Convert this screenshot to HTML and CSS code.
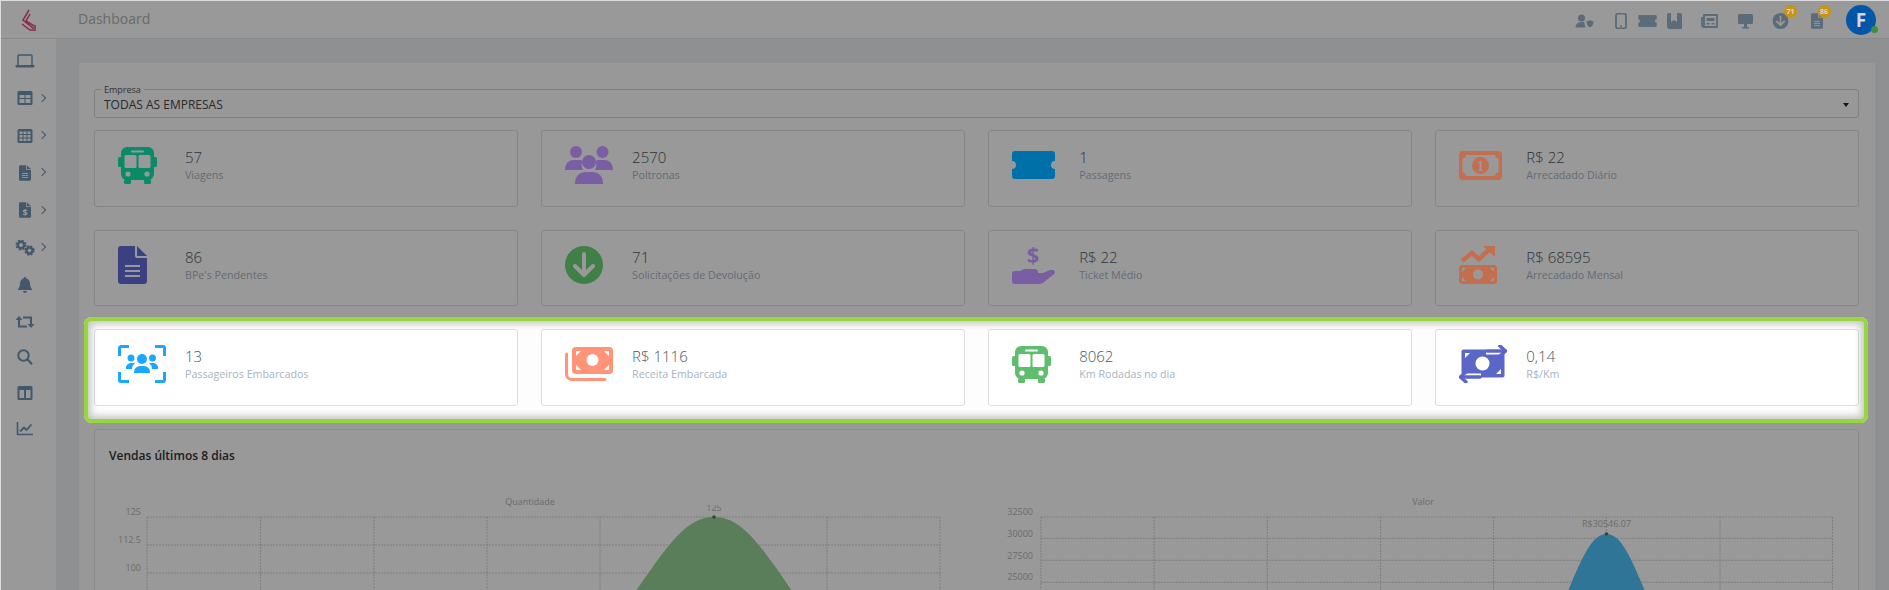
FILE: index.html
```html
<!DOCTYPE html>
<html lang="en">
<head>
    <meta charset="UTF-8">
    <meta name="viewport" content="width=device-width, initial-scale=1.0">
    <title>Dashboard</title>
    <link rel="stylesheet" href="styles.css">
</head>
<body>
<div class="shell">

    <svg class="icon-defs" width="0" height="0">
        <defs>
            <symbol id="bus" viewBox="0 0 39 37">
                <rect x="3" y="0" width="33" height="33" rx="6" fill="currentColor"/>
                <rect x="0" y="10" width="4" height="10" rx="1.5" fill="currentColor"/>
                <rect x="35" y="10" width="4" height="10" rx="1.5" fill="currentColor"/>
                <rect x="6" y="32" width="7" height="5" rx="1.5" fill="currentColor"/>
                <rect x="26" y="32" width="7" height="5" rx="1.5" fill="currentColor"/>
                <rect class="cut" x="6.5" y="8" width="12" height="13" rx="1.5"/>
                <rect class="cut" x="20.5" y="8" width="12" height="13" rx="1.5"/>
                <rect class="cut" x="13" y="3.5" width="13" height="2" rx="1"/>
                <circle class="cut" cx="10" cy="27" r="2.6"/>
                <circle class="cut" cx="29" cy="27" r="2.6"/>
            </symbol>
            <symbol id="arrow-circle" viewBox="0 0 38 38">
                <circle cx="19" cy="19" r="19" fill="currentColor"/>
                <path class="cut-line" d="M19 8V28M10 20L19 29L28 20" fill="none" stroke-width="4" stroke-linecap="round" stroke-linejoin="round"/>
            </symbol>
            <symbol id="ticket" viewBox="0 0 43 28">
                <path fill="currentColor" d="M3 0H40a3 3 0 0 1 3 3V10a4 4 0 0 0 0 8V25a3 3 0 0 1-3 3H3a3 3 0 0 1-3-3V18a4 4 0 0 0 0-8V3a3 3 0 0 1 3-3z"/>
            </symbol>
            <symbol id="doc" viewBox="0 0 29 38">
                <path fill="currentColor" d="M3 0H17V10a2 2 0 0 0 2 2H29V35a3 3 0 0 1-3 3H3a3 3 0 0 1-3-3V3a3 3 0 0 1 3-3zM19 0L29 10H19z"/>
                <path class="cut-line" d="M7 20H22M7 25H22M7 30H22" stroke-width="2.2"/>
            </symbol>
        </defs>
    </svg>

    <header class="topbar">
        <div class="brand">
            <svg class="logo" viewBox="0 0 17 22">
                <path d="M9 1L3 11L13 19H16M10 5L6 12L14 17H16M2 15L10 21H16" fill="none" stroke="#e2457f" stroke-width="1.5"/>
            </svg>
            <span class="page-title">Dashboard</span>
        </div>
        <div class="top-tools">
            <svg class="top-icon" viewBox="0 0 27 16">
                <circle cx="10.500" cy="5" r="3.500" fill="currentColor"/>
                <path d="M4.500 14.500a5.500 5.500 0 0 1 5.500-5.500h3l1.500 5.500z" fill="currentColor"/>
                <path d="M15.500 8.500l3.500-1.300 3.500 1.300c0 3.500-1.800 5.300-3.500 6-1.700-.7-3.500-2.500-3.500-6z" fill="currentColor"/>
            </svg>
            <div class="icon-group">
                <svg class="top-icon" viewBox="0 0 27 16">
                    <rect x="9" y="0.500" width="10" height="15" rx="2" fill="none" stroke="currentColor" stroke-width="1.800"/>
                    <circle cx="14" cy="13" r="1" fill="currentColor"/>
                </svg>
                <svg class="top-icon" viewBox="0 0 27 16"><use href="#ticket" x="1" y="2" width="25" height="12"/></svg>
                <svg class="top-icon" viewBox="0 0 27 16">
                    <path fill="currentColor" d="M8 0h2V9l3-2 3 2V0h3a2 2 0 0 1 2 2V16H9a3 3 0 0 1-3-3V2a2 2 0 0 1 2-2z"/>
                </svg>
            </div>
            <svg class="top-icon" viewBox="0 0 27 16">
                <path fill="none" stroke="currentColor" stroke-width="1.800" d="M8 2H21V14H8zM8 5H6V12a2 2 0 0 0 2 2"/>
                <path d="M10.500 5h8v3h-8zM10.500 10h3v1.500h-3zM15.500 10h3v1.500h-3z" fill="currentColor"/>
            </svg>
            <svg class="top-icon" viewBox="0 0 27 16">
                <rect x="6" y="1" width="15" height="10" rx="1.500" fill="currentColor"/>
                <path d="M12 11h3v3h2v1.500h-7V14h2z" fill="currentColor"/>
            </svg>
            <div class="tool-badged">
                <svg class="top-icon" viewBox="0 0 27 16"><use href="#arrow-circle" x="5.500" y="0" width="16" height="16"/></svg>
                <span class="badge badge-down">71</span>
            </div>
            <div class="tool-badged">
                <svg class="top-icon" viewBox="0 0 27 16"><use href="#doc" x="8" y="0" width="12" height="16"/></svg>
                <span class="badge badge-doc">86</span>
            </div>
            <div class="avatar">F<span class="status-dot"></span></div>
        </div>
    </header>

    <div class="layout">
        <aside class="sidebar">
            <div class="side-item">
                <svg class="side-icon" viewBox="0 0 20 14">
                    <path d="M3 11V2a1 1 0 0 1 1-1H16a1 1 0 0 1 1 1v9" fill="none" stroke="currentColor" stroke-width="1.500"/>
                    <path d="M0.500 11H19.500V12a1.500 1.500 0 0 1-1.500 1.500H2A1.500 1.500 0 0 1 0.500 12z" fill="currentColor"/>
                </svg>
            </div>
            <div class="side-item">
                <svg class="side-icon" viewBox="0 0 20 14">
                    <rect x="2.500" y="0" width="15" height="14" rx="1.500" fill="currentColor"/>
                    <path d="M4.500 4h5v3h-5zM10.500 4h5v3h-5zM4.500 8h5v4h-5zM10.500 8h5v4h-5z" fill="#fff"/>
                </svg>
                <span class="chevron"></span>
            </div>
            <div class="side-item">
                <svg class="side-icon" viewBox="0 0 20 14">
                    <rect x="2.500" y="0" width="15" height="14" rx="1.500" fill="currentColor"/>
                    <path d="M4.500 2.500h3v2.500h-3zM8.500 2.500h3v2.500h-3zM12.500 2.500h3v2.500h-3zM4.500 6h3v2.500h-3zM8.500 6h3v2.500h-3zM12.500 6h3v2.500h-3zM4.500 9.500h3v2.500h-3zM8.500 9.500h3v2.500h-3zM12.500 9.500h3v2.500h-3z" fill="#fff"/>
                </svg>
                <span class="chevron"></span>
            </div>
            <div class="side-item">
                <svg class="side-icon" viewBox="0 0 20 16"><use href="#doc" x="4" y="0" width="12" height="16"/></svg>
                <span class="chevron"></span>
            </div>
            <div class="side-item">
                <svg class="side-icon" viewBox="0 0 20 16">
                    <use href="#doc" x="4" y="0" width="12" height="16"/>
                    <rect x="6" y="6" width="8" height="9" fill="currentColor"/>
                    <text x="10" y="14" text-anchor="middle" class="icon-text">$</text>
                </svg>
                <span class="chevron"></span>
            </div>
            <div class="side-item">
                <svg class="side-icon" viewBox="0 0 20 16">
                    <circle cx="6" cy="5" r="3.200" fill="none" stroke="currentColor" stroke-width="2.400"/>
                    <circle cx="6" cy="5" r="4.700" fill="none" stroke="currentColor" stroke-width="1.600" stroke-dasharray="2 1.700"/>
                    <circle cx="14.500" cy="10.500" r="3" fill="none" stroke="currentColor" stroke-width="2.400"/>
                    <circle cx="14.500" cy="10.500" r="4.400" fill="none" stroke="currentColor" stroke-width="1.600" stroke-dasharray="2 1.500"/>
                </svg>
                <span class="chevron"></span>
            </div>
            <div class="side-item">
                <svg class="side-icon" viewBox="0 0 20 16">
                    <path fill="currentColor" d="M10 0a1.200 1.200 0 0 1 1.200 1.300C13.500 2 15 4 15 6.500c0 3 1 4.500 2 5.500v1H3v-1c1-1 2-2.500 2-5.500C5 4 6.500 2 8.800 1.300A1.200 1.200 0 0 1 10 0zM8 14h4a2 2 0 0 1-4 0z"/>
                </svg>
            </div>
            <div class="side-item side-low">
                <svg class="side-icon" viewBox="0 0 20 16">
                    <path d="M4 4V12.500H12M8 3.500H16V12" fill="none" stroke="currentColor" stroke-width="2"/>
                    <path d="M0.500 6L4 2L7.500 6zM12.500 10L16 14L19.500 10z" fill="currentColor"/>
                </svg>
            </div>
            <div class="side-item side-low">
                <svg class="side-icon" viewBox="0 0 20 16">
                    <circle cx="8.500" cy="6.500" r="5.200" fill="none" stroke="currentColor" stroke-width="2"/>
                    <path d="M12.500 10.500L17 15.200" stroke="currentColor" stroke-width="2.200"/>
                </svg>
            </div>
            <div class="side-item side-low">
                <svg class="side-icon" viewBox="0 0 20 14">
                    <rect x="2.500" y="0" width="15" height="14" rx="1.500" fill="currentColor"/>
                    <path d="M4.500 4h4.500v8h-4.500zM11 4h4.500v8H11z" fill="#fff"/>
                </svg>
            </div>
            <div class="side-item side-low">
                <svg class="side-icon" viewBox="0 0 20 14">
                    <path d="M2.500 0V12.500H18" fill="none" stroke="currentColor" stroke-width="1.600"/>
                    <path d="M5 9.500L9 5.500L11.500 8L16.500 2.500" fill="none" stroke="currentColor" stroke-width="1.800"/>
                </svg>
            </div>
        </aside>

        <main class="content">
            <section class="panel">
                <div class="select-box">
                    <span class="select-label">Empresa</span>
                    <span class="select-value">TODAS AS EMPRESAS</span>
                    <span class="select-caret"></span>
                </div>

                <div class="cards">
                    <div class="card">
                        <div class="card-icon"><svg class="i-dim i-teal" width="39" height="37"><use href="#bus"/></svg></div>
                        <div class="card-text"><div class="card-num">57</div><div class="card-label">Viagens</div></div>
                    </div>
                    <div class="card">
                        <div class="card-icon">
                            <svg class="i-dim i-purple" width="48" height="38" viewBox="0 0 48 38" fill="currentColor">
                                <circle cx="11" cy="6" r="6"/>
                                <circle cx="37.500" cy="6" r="6"/>
                                <circle cx="24" cy="16" r="7"/>
                                <path d="M0 24C0 17 4 14 9 14h5c2 0 3 .5 3.500 1.500a9 9 0 0 0 .5 8.500z"/>
                                <path d="M48 24C48 17 44 14 39 14h-5c-2 0-3 .5-3.500 1.500a9 9 0 0 1-.5 8.500z"/>
                                <path d="M10 38v-2a10 10 0 0 1 10-10h8a10 10 0 0 1 10 10v2z"/>
                            </svg>
                        </div>
                        <div class="card-text"><div class="card-num">2570</div><div class="card-label">Poltronas</div></div>
                    </div>
                    <div class="card">
                        <div class="card-icon"><svg class="i-dim i-blue" width="43" height="28"><use href="#ticket"/></svg></div>
                        <div class="card-text"><div class="card-num">1</div><div class="card-label">Passagens</div></div>
                    </div>
                    <div class="card">
                        <div class="card-icon">
                            <svg class="i-dim i-orange" width="43" height="29" viewBox="0 0 43 29">
                                <rect width="43" height="29" rx="4" fill="currentColor"/>
                                <path class="cut" d="M7 4H36c0 2 1.500 3.500 3.500 3.500V21.500c-2 0-3.500 1.500-3.500 3.500H7c0-2-1.500-3.500-3.500-3.500V7.500C5.500 7.500 7 6 7 4z"/>
                                <circle cx="21.500" cy="14.500" r="8.500" fill="currentColor"/>
                                <text x="21.500" y="19.500" text-anchor="middle" class="cut icon-one">1</text>
                            </svg>
                        </div>
                        <div class="card-text"><div class="card-num">R$ 22</div><div class="card-label">Arrecadado Diário</div></div>
                    </div>

                    <div class="card">
                        <div class="card-icon"><svg class="i-dim i-indigo" width="29" height="38"><use href="#doc"/></svg></div>
                        <div class="card-text"><div class="card-num">86</div><div class="card-label">BPe's Pendentes</div></div>
                    </div>
                    <div class="card">
                        <div class="card-icon"><svg class="i-dim i-green" width="38" height="38"><use href="#arrow-circle"/></svg></div>
                        <div class="card-text"><div class="card-num">71</div><div class="card-label">Solicitações de Devolução</div></div>
                    </div>
                    <div class="card">
                        <div class="card-icon">
                            <svg class="i-dim i-purple" width="43" height="38" viewBox="0 0 43 38" fill="currentColor">
                                <text x="21" y="17" text-anchor="middle" class="icon-dollar">$</text>
                                <path d="M0 28q0-3 3-3h5l4-2h10q4 0 4 3v1h5l7-3q4-1 5 2q0 2-2 3l-9 7q-2 2-5 2H3q-3 0-3-3z"/>
                            </svg>
                        </div>
                        <div class="card-text"><div class="card-num">R$ 22</div><div class="card-label">Ticket Médio</div></div>
                    </div>
                    <div class="card">
                        <div class="card-icon">
                            <svg class="i-dim i-orange" width="39" height="38" viewBox="0 0 39 38">
                                <path d="M3 15L13 7L20 13L31 3" fill="none" stroke="currentColor" stroke-width="4.500"/>
                                <path d="M24 0H36V11z" fill="currentColor"/>
                                <rect y="19" width="38" height="19" rx="3" fill="currentColor"/>
                                <circle class="cut" cx="19" cy="28.500" r="5"/>
                                <path class="cut" d="M3 22h4l-4 4zM35 22h-4l4 4zM3 35h4l-4-4zM35 35h-4l4-4z"/>
                            </svg>
                        </div>
                        <div class="card-text"><div class="card-num">R$ 68595</div><div class="card-label">Arrecadado Mensal</div></div>
                    </div>

                    <div class="card">
                        <div class="card-icon">
                            <svg class="i-sky" width="48" height="38" viewBox="0 0 48 38" fill="currentColor">
                                <path d="M1.500 11V3a1.500 1.500 0 0 1 1.500-1.500H11M37 1.500H45A1.500 1.500 0 0 1 46.500 3V11M46.500 27V35A1.500 1.500 0 0 1 45 36.500H37M11 36.500H3A1.500 1.500 0 0 1 1.500 35V27" fill="none" stroke="currentColor" stroke-width="3"/>
                                <circle cx="24" cy="14" r="5"/>
                                <circle cx="13" cy="13" r="3.500"/>
                                <circle cx="34.500" cy="13" r="3.500"/>
                                <path d="M16 28v-1a6 6 0 0 1 6-6h4a6 6 0 0 1 6 6v1z"/>
                                <path d="M8 24a5 5 0 0 1 5-6h4a8 8 0 0 0-3 6zM40 24a5 5 0 0 0-5-6h-4a8 8 0 0 1 3 6z"/>
                            </svg>
                        </div>
                        <div class="card-text"><div class="card-num">13</div><div class="card-label">Passageiros Embarcados</div></div>
                    </div>
                    <div class="card">
                        <div class="card-icon">
                            <svg class="i-coral" width="48" height="34" viewBox="0 0 48 34">
                                <rect x="7" y="0" width="41" height="27" rx="4" fill="currentColor"/>
                                <circle cx="27.500" cy="13" r="6" fill="#fff"/>
                                <path d="M11 4h5l-5 5zM44 4h-5l5 5zM11 23h5l-5-5zM44 23h-5l5-5z" fill="#fff"/>
                                <path d="M1.500 7V27a5.500 5.500 0 0 0 5.500 5.500H40" fill="none" stroke="currentColor" stroke-width="3" stroke-linecap="round"/>
                            </svg>
                        </div>
                        <div class="card-text"><div class="card-num">R$ 1116</div><div class="card-label">Receita Embarcada</div></div>
                    </div>
                    <div class="card">
                        <div class="card-icon"><svg class="i-bus-green" width="39" height="37"><use href="#bus"/></svg></div>
                        <div class="card-text"><div class="card-num">8062</div><div class="card-label">Km Rodadas no dia</div></div>
                    </div>
                    <div class="card">
                        <div class="card-icon">
                            <svg class="i-indigo-2" width="48" height="38" viewBox="0 0 48 38">
                                <rect x="2.500" y="4.500" width="43" height="28" rx="2" fill="currentColor"/>
                                <circle cx="23.500" cy="18.500" r="7" fill="#fff"/>
                                <path d="M6 8h5l-5 5zM42 29h-5l5-5z" fill="#fff"/>
                                <path d="M27 6H44M2 32H22" stroke="#fff" stroke-width="7"/>
                                <path d="M28 6H44M3 32H21" stroke="currentColor" stroke-width="3.500" stroke-linecap="round"/>
                                <path d="M41 1L46.500 6L41 11M7 27L1.500 32L7 37" fill="none" stroke="currentColor" stroke-width="3.500" stroke-linecap="round" stroke-linejoin="round"/>
                            </svg>
                        </div>
                        <div class="card-text"><div class="card-num">0,14</div><div class="card-label">R$/Km</div></div>
                    </div>
                </div>

                <div class="chart-card">
                    <h3 class="chart-heading">Vendas últimos 8 dias</h3>
                    <div class="charts">
                        <svg class="chart" viewBox="0 0 868 200">
                            <defs><clipPath id="peak-clip"><rect x="560" y="14" width="90" height="20"/></clipPath></defs>
                            <path class="grid-line" d="M39 26V200M152.400 26V200M266 26V200M379 26V200M492 26V200M606 26V200M719 26V200M832 26V200M39 26H832M39 54H832M39 82H832M39 110H832M39 138H832M39 166H832"/>
                            <path class="area-green" d="M528 100C562 50 580 26 606 26C632 26 650 50 684 100L730 190H482Z"/>
                            <circle class="peak-dot" cx="606" cy="26" r="1.800"/>
                            <text class="chart-title" x="422" y="14">Quantidade</text>
                            <text class="chart-value" x="606" y="20" clip-path="url(#peak-clip)">125</text>
                            <text class="axis-label" x="33" y="24">125</text>
                            <text class="axis-label" x="33" y="52">112.5</text>
                            <text class="axis-label" x="33" y="80">100</text>
                        </svg>
                        <svg class="chart" viewBox="0 0 868 200">
                            <path class="grid-line" d="M63.900 26V200M177.100 26V200M290.300 26V200M403.500 26V200M516.500 26V200M629.500 26V200M743 26V200M855.500 26V200M63.900 26H855.500M63.900 47.300H855.500M63.900 69.300H855.500M63.900 91.300H855.500M63.900 113H855.500"/>
                            <path class="area-blue" d="M591 100C604 70 614 43 629.500 43C645 43 655 70 668 100L690 190H570Z"/>
                            <circle class="peak-dot" cx="629.500" cy="43" r="1.800"/>
                            <text class="chart-title" x="446" y="14">Valor</text>
                            <text class="chart-value" x="629.500" y="36">R$30546.07</text>
                            <text class="axis-label" x="56" y="24">32500</text>
                            <text class="axis-label" x="56" y="46">30000</text>
                            <text class="axis-label" x="56" y="68">27500</text>
                            <text class="axis-label" x="56" y="89">25000</text>
                        </svg>
                    </div>
                </div>
            </section>
        </main>
    </div>

    <!-- tour highlight, dims everything around it -->
    <div class="tour-highlight"></div>
</div>
</body>
</html>
```

FILE: styles.css
```css
* {
    margin: 0;
    padding: 0;
    box-sizing: border-box;
}

html, body {
    height: 590px;
    overflow: hidden;
}

body {
    background-color: #dcdcdc;
    font-family: "Open Sans", "Liberation Sans", sans-serif;
    padding: 1px 0 0 1px;
}

.shell {
    position: relative;
    height: 589px;
    overflow: hidden;
    background-color: #eef0f4;
}

.icon-defs {
    position: absolute;
}

.cut {
    fill: var(--cut, #fff);
}

.cut-line {
    stroke: var(--cut, #fff);
}

/* top bar */
.topbar {
    height: 38px;
    background-color: #fff;
    border-bottom: 1px solid #e3e3e6;
    display: flex;
    justify-content: space-between;
    align-items: center;
    padding-right: 13px;
}

.brand {
    display: flex;
    align-items: center;
}

.logo {
    width: 17px;
    height: 22px;
    margin-left: 19px;
}

.page-title {
    margin: -2px 0 0 41px;
    font-size: 14px;
    color: #aeb2b6;
}

.top-tools {
    display: flex;
    align-items: center;
    gap: 8.5px;
    color: #98b2c8;
}

.icon-group {
    display: flex;
}

.top-icon {
    display: block;
    width: 27px;
    height: 16px;
    margin-top: 2px;
}

.tool-badged {
    position: relative;
}

.badge {
    position: absolute;
    z-index: 20;
    width: 13px;
    height: 13px;
    border-radius: 50%;
    background-color: #c7960e;
    color: #d9d9d9;
    font-size: 7px;
    font-weight: 700;
    line-height: 13px;
    text-align: center;
}

.badge-down {
    top: -6px;
    left: 17px;
}

.badge-doc {
    top: -6px;
    left: 15px;
}

.avatar {
    position: relative;
    z-index: 20;
    width: 30px;
    height: 30px;
    margin-left: 8px;
    border-radius: 50%;
    background-color: #0056a8;
    color: #d8d8d8;
    font-size: 19px;
    font-weight: 700;
    line-height: 30px;
    text-align: center;
}

.status-dot {
    position: absolute;
    right: -2px;
    bottom: 2px;
    width: 7px;
    height: 7px;
    border-radius: 50%;
    background-color: #3e8e3e;
}

/* left menu */
.layout {
    display: flex;
}

.sidebar {
    width: 55px;
    flex-shrink: 0;
    height: 551px;
    padding-top: 3.5px;
    background-color: #fff;
    color: #7193b1;
}

.side-item {
    position: relative;
    height: 37.33px;
    display: flex;
    align-items: center;
    padding-left: 14px;
}

.side-low {
    height: 35.75px;
}

.side-icon {
    width: 20px;
    height: 16px;
}

.chevron {
    position: absolute;
    left: 38px;
    top: 15px;
    width: 6px;
    height: 6px;
    border-top: 1px solid #7193b1;
    border-right: 1px solid #7193b1;
    transform: rotate(45deg);
}

.icon-text {
    fill: #fff;
    font-size: 9px;
    font-weight: 700;
    font-family: "Open Sans", sans-serif;
}

/* main area */
.content {
    flex: 1;
    min-width: 0;
    padding: 24px 14px 0 23px;
}

.panel {
    background-color: #fdfdfd;
    padding: 26px 16px 0 15px;
}

.select-box {
    position: relative;
    height: 29px;
    border: 1px solid #d4d6d8;
    border-radius: 3px;
    padding-left: 9px;
    display: flex;
    align-items: center;
}

.select-label {
    position: absolute;
    left: 6px;
    top: -5px;
    padding: 0 3px;
    background-color: #fdfdfd;
    font-size: 9px;
    line-height: 10px;
    color: #555;
}

.select-value {
    margin-top: 2px;
    font-size: 12px;
    color: #474747;
}

.select-caret {
    position: absolute;
    right: 9px;
    top: 13px;
    border-left: 3.5px solid transparent;
    border-right: 3.5px solid transparent;
    border-top: 4px solid #222;
}

/* indicator cards */
.cards {
    display: grid;
    grid-template-columns: repeat(4, 1fr);
    column-gap: 23.4px;
    row-gap: 23px;
    margin-top: 12px;
}

.card {
    height: 76.5px;
    background-color: #fff;
    border: 1px solid #dcdfe2;
    border-radius: 3px;
    display: flex;
    padding: 15px 0 0 22.5px;
}

.card-icon {
    width: 67.5px;
    height: 38px;
    flex-shrink: 0;
    display: flex;
    align-items: center;
}

.card-text {
    padding-top: 1px;
}

.card-num {
    font-size: 15px;
    font-weight: 300;
    line-height: 20px;
    color: #4a5862;
}

.card-label {
    font-size: 10.7px;
    line-height: 16px;
    color: #a6b4c4;
}

/* icons of the dimmed rows sit above the overlay, as in the screenshot */
.i-dim {
    position: relative;
    z-index: 20;
    --cut: #999;
}

.i-teal { color: #0a8a66; }
.i-purple { color: #7a5ea3; }
.i-blue { color: #0070a8; }
.i-orange { color: #c46e50; }
.i-indigo { color: #3a4080; }
.i-green { color: #3f7f48; }
.i-sky { color: #1aa7ff; }
.i-coral { color: #ff9478; }
.i-bus-green { color: #5fbe6e; }
.i-indigo-2 { color: #5b67c7; }

.icon-one {
    font-family: "Liberation Serif", serif;
    font-size: 14px;
    font-weight: 700;
}

.icon-dollar {
    font-family: "Open Sans", sans-serif;
    font-size: 22px;
    font-weight: 700;
}

/* charts */
.chart-card {
    margin-top: 23px;
    height: 300px;
    background-color: #fff;
    border: 1px solid #e4e6e8;
    border-radius: 3px;
    padding: 17px 13px 0;
}

.chart-heading {
    margin-left: 1px;
    font-size: 12px;
    font-weight: 600;
    line-height: 18px;
    color: #333;
}

.charts {
    display: grid;
    grid-template-columns: 1fr 1fr;
    margin-top: 26px;
}

.chart {
    display: block;
    width: 868px;
    height: 200px;
}

.grid-line {
    fill: none;
    stroke: #d2d2d2;
    stroke-width: 1;
    stroke-dasharray: 2 1;
}

.area-green { fill: #96d096; }
.area-blue { fill: #4dc3fd; }
.peak-dot { fill: #4d7d4d; }

.chart text {
    font-family: "Open Sans", sans-serif;
    font-size: 9px;
    fill: #b4b4b4;
}

.chart .chart-title,
.chart .chart-value {
    text-anchor: middle;
}

.chart .axis-label {
    text-anchor: end;
}

/* tour highlight */
.tour-highlight {
    position: absolute;
    z-index: 10;
    left: 83px;
    top: 316px;
    width: 1784px;
    height: 106px;
    border: 4px solid #98d63c;
    border-radius: 8px;
    box-shadow: 0 0 0 3000px rgba(0, 0, 0, 0.4), inset 0 0 7px 3px rgba(0, 0, 0, 0.22);
    pointer-events: none;
}
```
